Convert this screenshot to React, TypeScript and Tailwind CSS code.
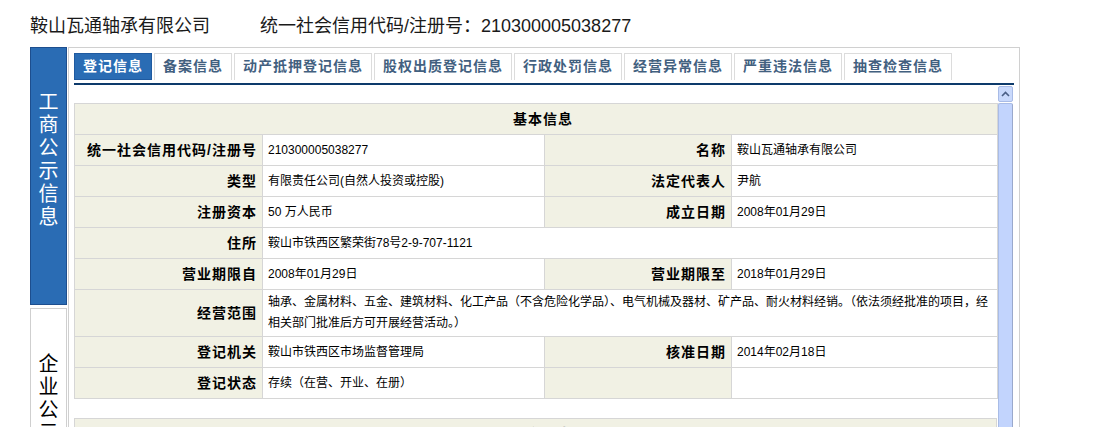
import React from 'react';

const tabs = ['登记信息', '备案信息', '动产抵押登记信息', '股权出质登记信息', '行政处罚信息', '经营异常信息', '严重违法信息', '抽查检查信息'];

type Row = { l1: string; v1: React.ReactNode; l2?: string; v2?: string; span?: boolean; tall?: boolean };

const rows: Row[] = [
  { l1: '统一社会信用代码/注册号', v1: '210300005038277', l2: '名称', v2: '鞍山瓦通轴承有限公司' },
  { l1: '类型', v1: '有限责任公司(自然人投资或控股)', l2: '法定代表人', v2: '尹航' },
  { l1: '注册资本', v1: '50 万人民币', l2: '成立日期', v2: '2008年01月29日' },
  { l1: '住所', v1: '鞍山市铁西区繁荣街78号2-9-707-1121', span: true },
  { l1: '营业期限自', v1: '2008年01月29日', l2: '营业期限至', v2: '2018年01月29日' },
  {
    l1: '经营范围',
    v1: (
      <>
        轴承、金属材料、五金、建筑材料、化工产品（不含危险化学品）、电气机械及器材、矿产品、耐火材料经销。（依法须经批准的项目，经
        <br />
        相关部门批准后方可开展经营活动。）
      </>
    ),
    span: true,
    tall: true,
  },
  { l1: '登记机关', v1: '鞍山市铁西区市场监督管理局', l2: '核准日期', v2: '2014年02月18日' },
  { l1: '登记状态', v1: '存续（在营、开业、在册）', l2: '', v2: '' },
];

const labelCls = 'border border-[#d6d6d6] bg-[#f1f1e4] text-right pr-[5px] text-[14px] font-bold tracking-[1px] text-black whitespace-nowrap';
const valueCls = 'border border-[#d6d6d6] bg-white pl-[5px] text-[12px] text-black whitespace-nowrap overflow-hidden';

const VerticalText: React.FC<{ text: string }> = ({ text }) => (
  <div className="flex flex-col items-center">
    {text.split('').map((c, i) => (
      <span key={i} className="block h-[23px] leading-[23px]">{c}</span>
    ))}
  </div>
);

const App: React.FC = () => {
  return (
    <div className="w-[1109px] h-[427px] overflow-hidden bg-white font-['Liberation_Sans','Noto_Sans_CJK_SC',sans-serif]">
      <div className="flex pl-[30px] pt-[14px] h-[47px] text-[18px] leading-[24px] text-[#1a1a1a]">
        <span>鞍山瓦通轴承有限公司</span>
        <span className="ml-[50px]">统一社会信用代码/注册号：210300005038277</span>
      </div>

      <div className="flex pl-[30px]">
        <aside className="w-[37px] flex flex-col gap-[3px] shrink-0">
          <div className="h-[258px] bg-[#2a6cb4] border border-[#1d4e8e] text-white text-[20px] pt-[41px] font-['Noto_Sans_CJK_SC',sans-serif]">
            <VerticalText text="工商公示信息" />
          </div>
          <div className="h-[200px] bg-white border border-[#cfcfcf] text-black text-[20px] pt-[42px] font-['Noto_Sans_CJK_SC',sans-serif]">
            <VerticalText text="企业公示信息" />
          </div>
        </aside>

        <main className="ml-px w-[952px] h-[400px] border border-[#d0d0d0] pt-[5px] px-[5px]">
          <div className="flex gap-[2px] h-[27px]">
            {tabs.map((t, i) => (
              <div
                key={t}
                className={
                  i === 0
                    ? 'h-[27px] px-[8px] border border-[#1f5aa0] bg-[#2a6cb4] text-white text-[14px] font-bold tracking-[1px] leading-[25px]'
                    : 'h-[27px] px-[8px] border border-b-0 border-[#dcdcdc] bg-white text-[#42607f] text-[14px] font-bold tracking-[1px] leading-[25px]'
                }
              >
                {t}
              </div>
            ))}
          </div>
          <div className="mt-[3px] h-[2px] bg-[#0d3a6b]" />

          <div className="flex gap-px">
            <div className="w-[923px] pt-[18px]">
              <table className="w-[923px] border-collapse table-fixed">
                <colgroup>
                  <col className="w-[188px]" />
                  <col className="w-[282px]" />
                  <col className="w-[187px]" />
                  <col className="w-[266px]" />
                </colgroup>
                <tbody>
                  <tr className="h-[31px]">
                    <td colSpan={4} className="border border-[#d6d6d6] bg-[#f1f1e4] text-center text-[14px] font-bold tracking-[1px] pl-[14px]">
                      基本信息
                    </td>
                  </tr>
                  {rows.map((r) => (
                    <tr key={r.l1} className={r.tall ? 'h-[47px]' : 'h-[31px]'}>
                      <td className={labelCls}>{r.l1}</td>
                      {r.span ? (
                        <td colSpan={3} className={`${valueCls} ${r.tall ? 'leading-[21px]' : ''}`}>{r.v1}</td>
                      ) : (
                        <>
                          <td className={valueCls}>{r.v1}</td>
                          <td className={labelCls}>{r.l2}</td>
                          <td className={valueCls}>{r.v2}</td>
                        </>
                      )}
                    </tr>
                  ))}
                </tbody>
              </table>

              <table className="w-[923px] border-collapse mt-[19px]">
                <tbody>
                  <tr className="h-[31px]">
                    <td className="border border-[#d6d6d6] bg-[#f1f1e4] text-center text-[14px] font-bold tracking-[1px] pl-[14px]">
                      股东信息
                    </td>
                  </tr>
                </tbody>
              </table>
            </div>

            <div className="w-[15px] pt-px flex flex-col gap-px">
              <div className="h-[16px] rounded-[2px] border border-[#a8bbe6] bg-[#c9d9fc] flex items-center justify-center">
                <svg width="9" height="6" viewBox="0 0 9 6">
                  <path d="M1 5 L4.5 1.5 L8 5" stroke="#4a5f86" strokeWidth="1.6" fill="none" />
                </svg>
              </div>
              <div className="h-[330px] border border-[#a9bce6] border-r-[#9aa9cc] bg-[#c2d4fd] rounded-[2px]" />
            </div>
          </div>
        </main>
      </div>
    </div>
  );
};

export default App;
